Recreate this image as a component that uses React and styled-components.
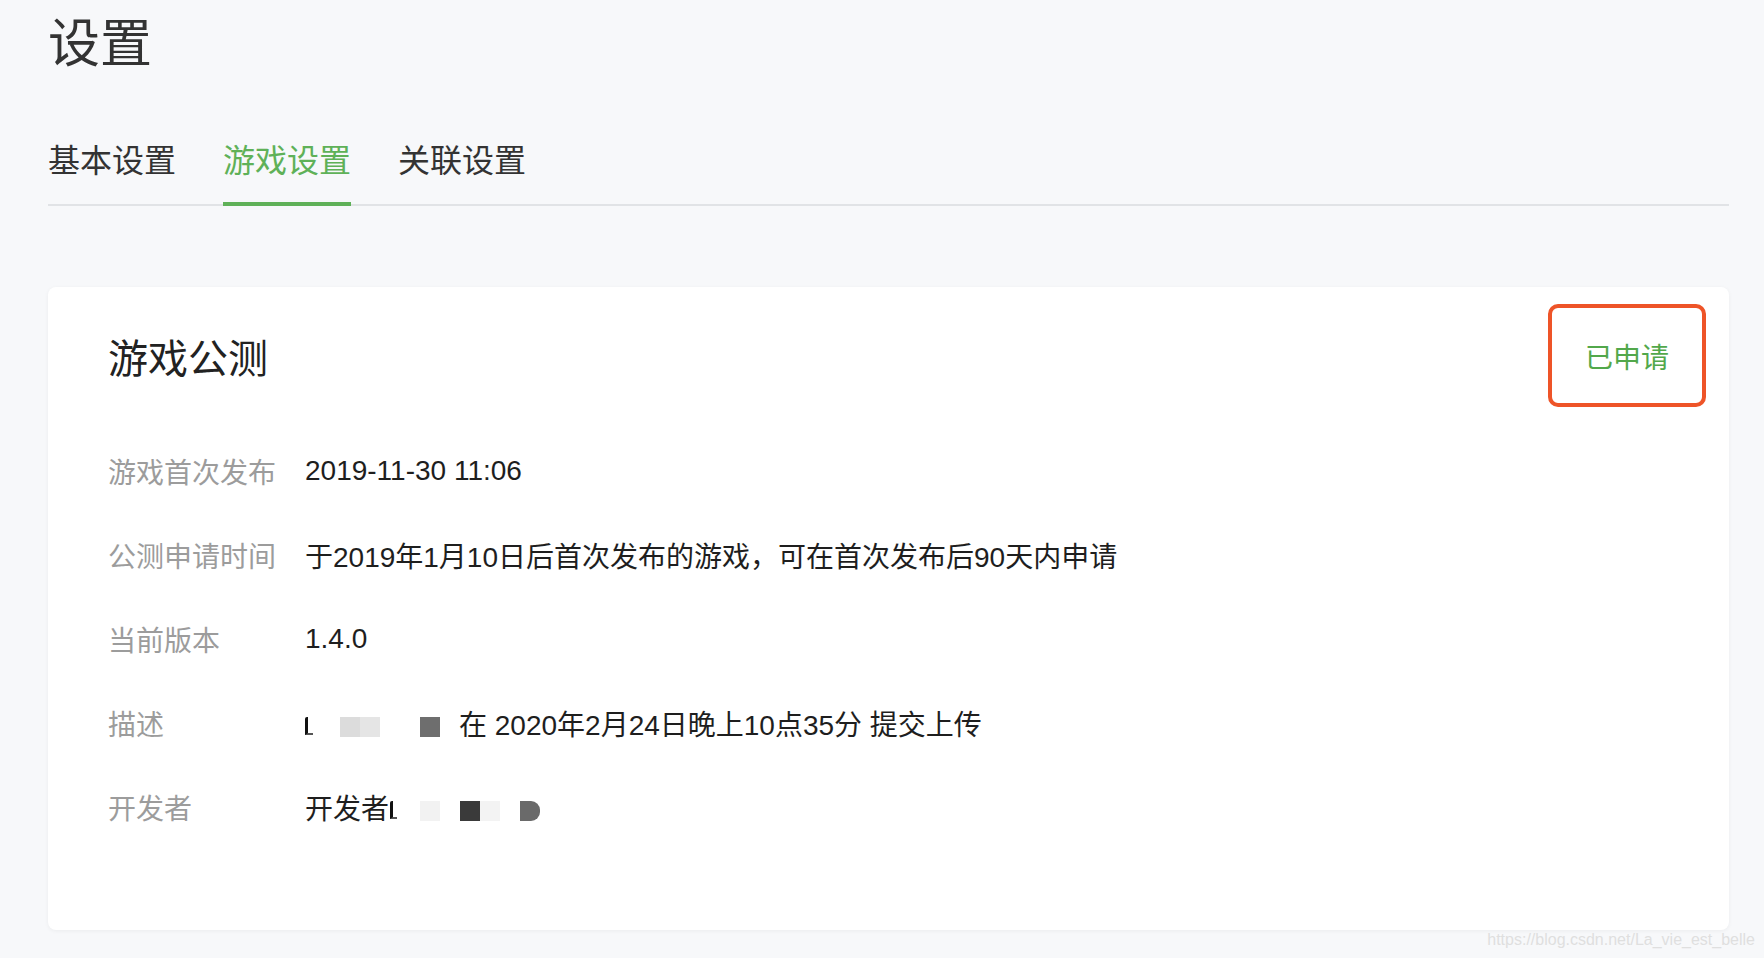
import React from 'react';
import styled, { createGlobalStyle } from 'styled-components';

const GlobalStyle = createGlobalStyle`
  html, body {
    margin: 0;
    padding: 0;
    background: #f7f8fa;
  }
  body {
    font-family: "Liberation Sans", "Noto Sans CJK SC", sans-serif;
    color: #333;
  }
`;

const Page = styled.div`
  padding: 15px 35px 0 48px;
  min-height: 943px;
`;

const Title = styled.h1`
  margin: 0;
  font-size: 52px;
  line-height: 58px;
  font-weight: 400;
  color: #333;
`;

const Tabs = styled.div`
  display: flex;
  gap: 47px;
  margin-top: 68px;
  border-bottom: 2px solid #e1e3e6;
`;

const Tab = styled.div`
  font-size: 32px;
  line-height: 40px;
  padding-bottom: 21px;
  margin-bottom: -2px;
  border-bottom: 4px solid ${(p) => (p.$active ? '#5fb158' : 'transparent')};
  color: ${(p) => (p.$active ? '#5fb158' : '#333')};
`;

const Card = styled.div`
  margin-top: 81px;
  background: #fff;
  border-radius: 8px;
  box-shadow: 0 1px 4px rgba(0, 0, 0, 0.05);
  padding: 17px 23px 81px 60px;
`;

const CardHeader = styled.div`
  display: flex;
  align-items: center;
  justify-content: space-between;
  height: 103px;
`;

const CardTitle = styled.h2`
  margin: 0;
  font-size: 40px;
  font-weight: 400;
  color: #222;
`;

const Applied = styled.div`
  width: 158px;
  height: 103px;
  box-sizing: border-box;
  border: 4px solid #ee5428;
  border-radius: 10px;
  display: flex;
  align-items: center;
  justify-content: center;
  font-size: 28px;
  color: #52a84b;
`;

const Rows = styled.div`
  margin-top: 22px;
`;

const Row = styled.div`
  display: flex;
  align-items: center;
  height: 84px;
  font-size: 28px;
`;

const Label = styled.div`
  width: 197px;
  flex-shrink: 0;
  color: #9c9c9c;
`;

const Value = styled.div`
  display: flex;
  align-items: center;
  color: #1e1e1e;
  white-space: pre;
`;

const Blot = styled.span`
  display: inline-block;
  width: ${(p) => p.$w}px;
  height: ${(p) => p.$h || 20}px;
  margin-left: ${(p) => p.$ml || 0}px;
  margin-top: 7px;
  background: ${(p) => p.$bg};
  border-radius: ${(p) => p.$r || '0'};
`;

const Mark = styled.span`
  display: inline-block;
  width: ${(p) => p.$w || 6}px;
  height: 18px;
  margin-left: ${(p) => p.$ml || 0}px;
  margin-top: 5px;
  box-sizing: border-box;
  border-left: 3px solid #111;
  border-bottom: 2px solid #555;
  border-top-left-radius: 2px;
`;

const Watermark = styled.div`
  text-align: right;
  margin-right: -26px;
  font-size: 16px;
  line-height: 20px;
  color: #dfdfdf;
`;

const tabs = ['基本设置', '游戏设置', '关联设置'];

export default function App() {
  return (
    <>
      <GlobalStyle />
      <Page>
        <Title>设置</Title>
        <Tabs>
          {tabs.map((t, i) => (
            <Tab key={t} $active={i === 1}>{t}</Tab>
          ))}
        </Tabs>
        <Card>
          <CardHeader>
            <CardTitle>游戏公测</CardTitle>
            <Applied>已申请</Applied>
          </CardHeader>
          <Rows>
            <Row>
              <Label>游戏首次发布</Label>
              <Value>2019-11-30 11:06</Value>
            </Row>
            <Row>
              <Label>公测申请时间</Label>
              <Value>于2019年1月10日后首次发布的游戏，可在首次发布后90天内申请</Value>
            </Row>
            <Row>
              <Label>当前版本</Label>
              <Value>1.4.0</Value>
            </Row>
            <Row>
              <Label>描述</Label>
              <Value>
                <Mark $w={8} />
                <Blot $w={20} $ml={27} $bg="#dcdcdc" />
                <Blot $w={20} $bg="#e5e5e5" />
                <Blot $w={20} $ml={40} $bg="#6e6e6e" />
                <span style={{ marginLeft: 19 }}>在 2020年2月24日晚上10点35分 提交上传</span>
              </Value>
            </Row>
            <Row>
              <Label>开发者</Label>
              <Value>
                开发者
                <Mark $w={7} $ml={1} />
                <Blot $w={20} $ml={23} $bg="#f2f2f2" />
                <Blot $w={20} $ml={20} $bg="#3a3a3a" />
                <Blot $w={20} $bg="#f3f3f3" />
                <Blot $w={20} $ml={20} $bg="#6a6a6a" $r="0 9px 9px 0" />
              </Value>
            </Row>
          </Rows>
        </Card>
        <Watermark>https://blog.csdn.net/La_vie_est_belle</Watermark>
      </Page>
    </>
  );
}
